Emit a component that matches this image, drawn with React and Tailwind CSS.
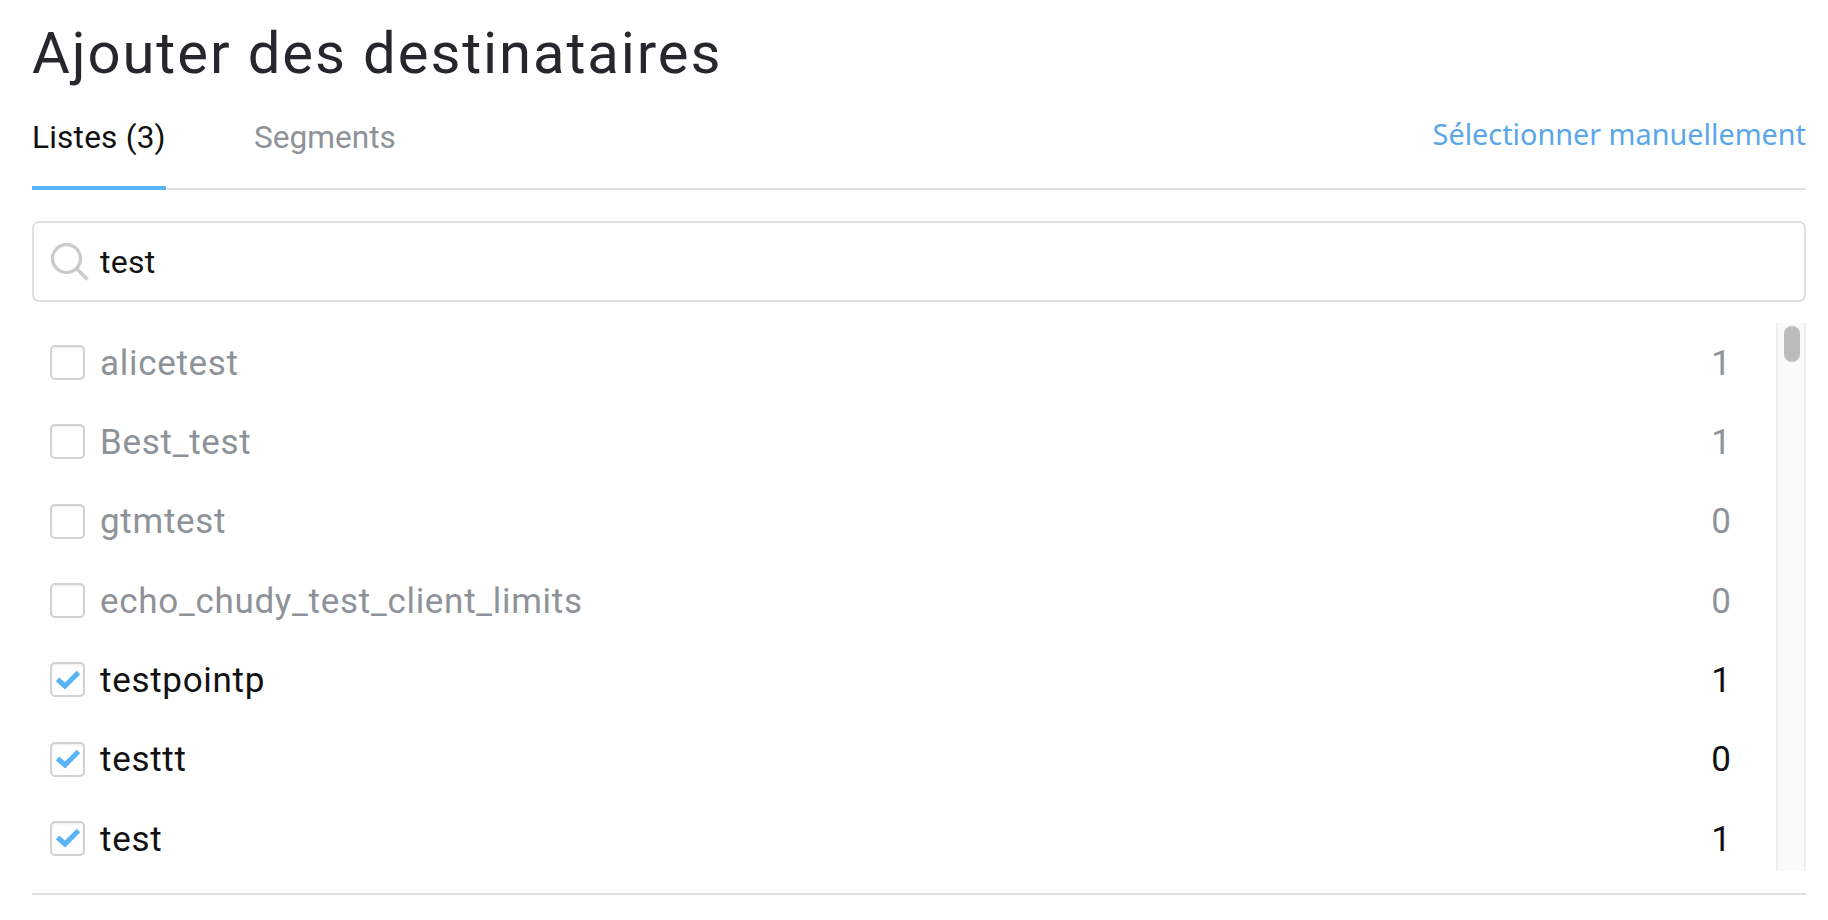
import React from 'react';

const rows = [
  { name: 'alicetest', count: 1 },
  { name: 'Best_test', count: 1 },
  { name: 'gtmtest', count: 0 },
  { name: 'echo_chudy_test_client_limits', count: 0 },
  { name: 'testpointp', count: 1, checked: true },
  { name: 'testtt', count: 0, checked: true },
  { name: 'test', count: 1, checked: true },
];

function Checkbox({ checked }) {
  return (
    <span className="flex h-[35px] w-[35px] shrink-0 items-center justify-center rounded-[5px] border-2 border-[#d2d2d4] bg-white shadow-[inset_0_1px_2px_rgba(0,0,0,0.08)]">
      {checked && (
        <svg width="24" height="20" viewBox="0 0 24 20" fill="none">
          <path d="M1.5 9.5L9 16L22.5 2.5" stroke="#58b4f6" strokeWidth="5" />
        </svg>
      )}
    </span>
  );
}

export default function App() {
  return (
    <div className="h-[920px] w-[1828px] overflow-hidden bg-white pl-8 pr-[22px] text-[35px] font-['Roboto',sans-serif]">
      <h1 className="pt-[21px] text-[58px] leading-[64px] tracking-[1.9px] text-[#26272c]">Ajouter des destinataires</h1>

      <div className="mt-[16px] flex h-[89px] items-start justify-between border-b-2 border-[#e0e0e2]">
        <div className="flex">
          <div className="h-[89px] w-[134px] border-b-4 border-[#58b4f6] pt-[17px] text-[31.6px] leading-[40px] tracking-[0.2px] text-[#111]">Listes (3)</div>
          <div className="ml-[88px] pt-[17px] text-[31.6px] leading-[40px] text-[#8e9299]">Segments</div>
        </div>
        <div className="pt-[13px] font-['Noto_Sans',sans-serif] text-[28.8px] leading-[40px] text-[#5aa6ea]">Sélectionner manuellement</div>
      </div>

      <div className="mt-[31px] flex h-[81px] items-center rounded-[7px] border-2 border-[#e0e0e2] pl-[17px]">
        <svg width="38" height="38" viewBox="0 0 38 38" fill="none" stroke="#cbcbcb" strokeWidth="3.4">
          <circle cx="15.5" cy="15.5" r="14" />
          <path d="M25 25L36.5 36.5" />
        </svg>
        <span className="ml-[11px] pt-[1px] text-[32px] tracking-[0.3px] text-[#111]">test</span>
      </div>

      <div className="mt-[21px] flex h-[548px]">
        <div className="flex-1">
          {rows.map((row) => (
            <div key={row.name} className="flex h-[79.3px] items-center pl-[18px] pr-[45px]">
              <Checkbox checked={row.checked} />
              <span className={`ml-[15px] flex-1 pt-[3px] tracking-[0.7px] ${row.checked ? 'text-[#111]' : 'text-[#8e9299]'}`}>{row.name}</span>
              <span className={`pt-[3px] ${row.checked ? 'text-[#111]' : 'text-[#8e9299]'}`}>{row.count}</span>
            </div>
          ))}
        </div>
        <div className="w-[30px] border-x-2 border-[#eeeeef] bg-[#fafafa] pl-[6px] pt-[3px]">
          <div className="h-[36px] w-[16px] rounded-[8px] bg-[#bcbcbe]" />
        </div>
      </div>

      <div className="mt-[22px] border-t-2 border-[#e0e0e2]" />
    </div>
  );
}
